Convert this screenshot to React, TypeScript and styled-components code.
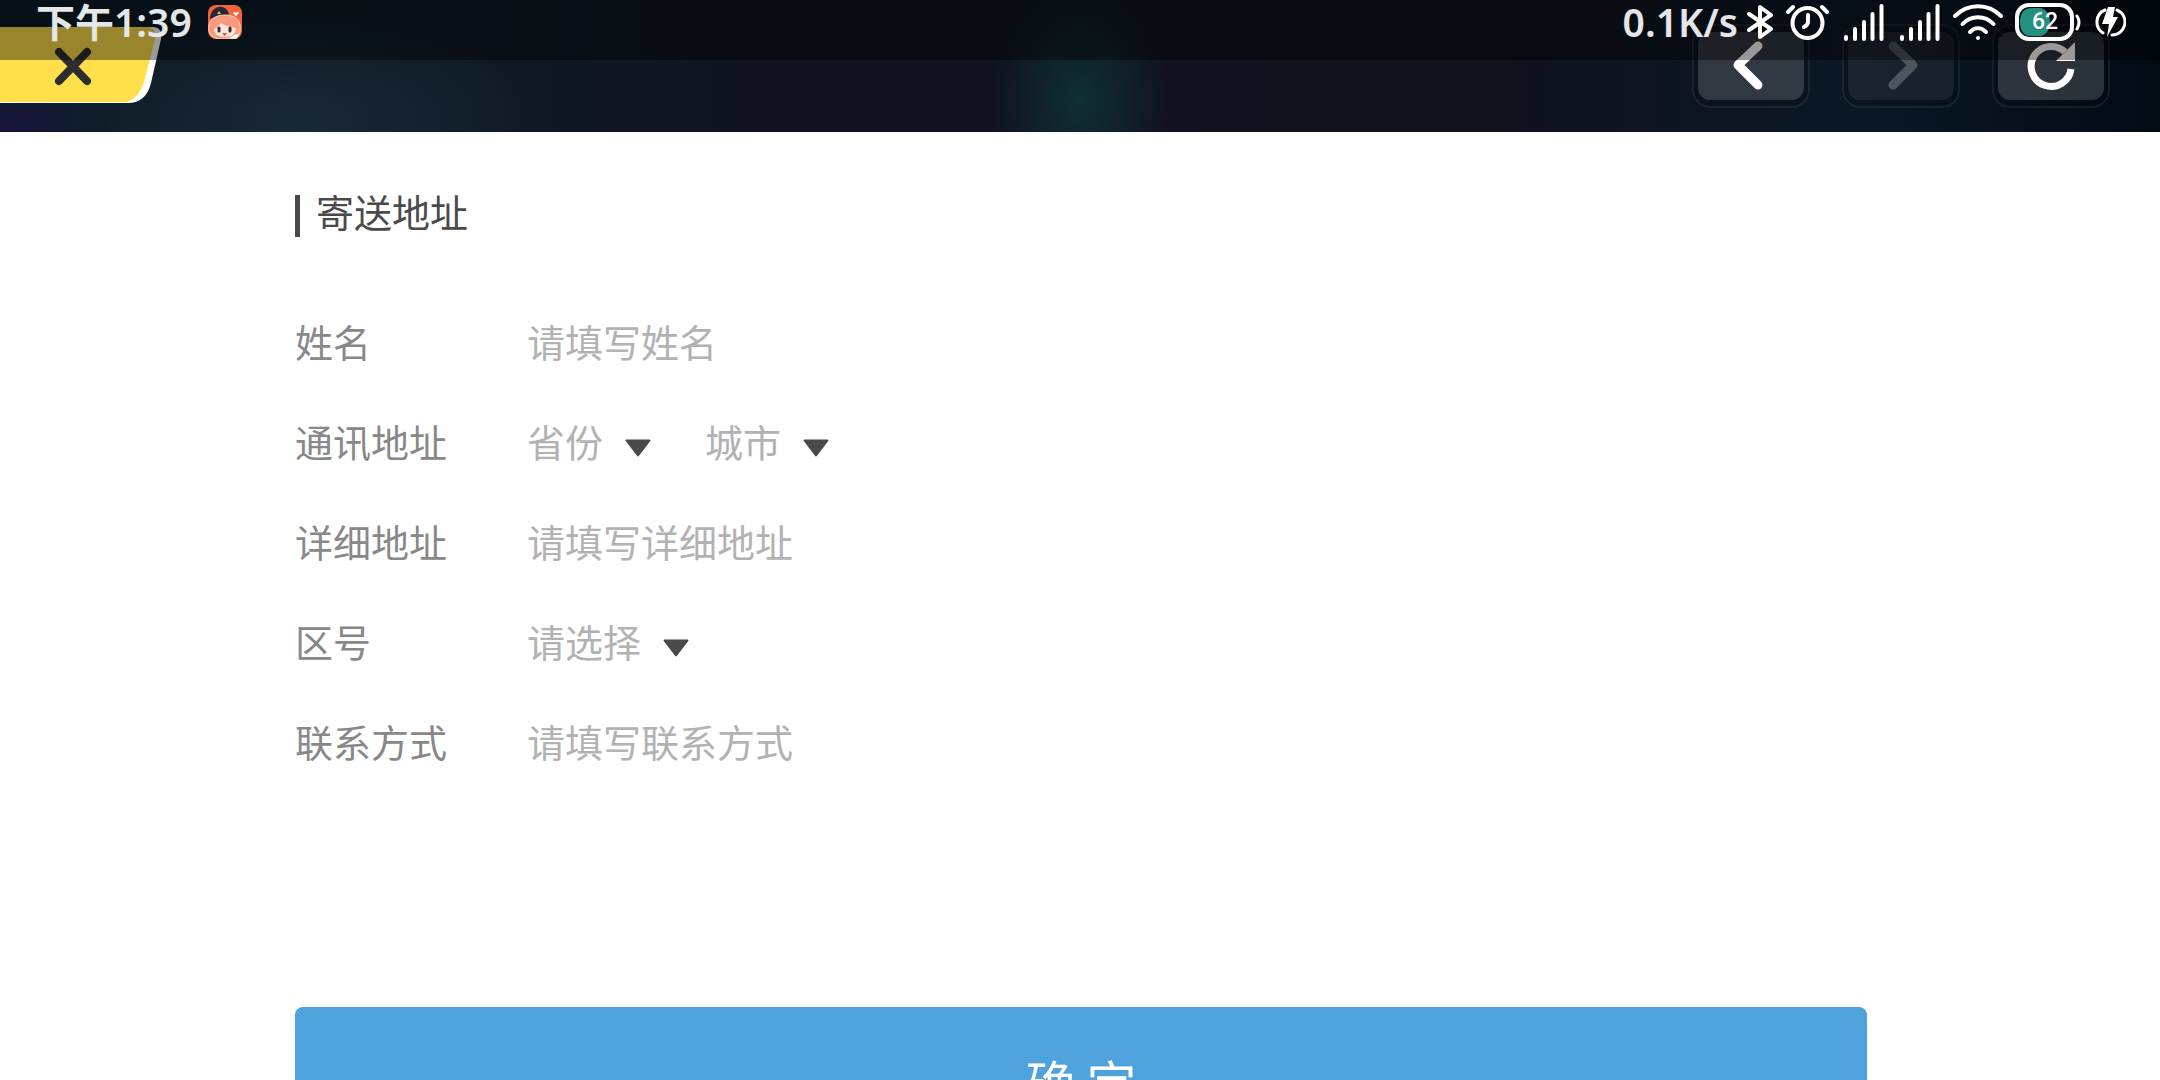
import React from "react";
import styled, { createGlobalStyle, css } from "styled-components";

const GlobalStyle = createGlobalStyle`
  *, *::before, *::after { box-sizing: border-box; }
  body {
    margin: 0;
    background: #fff;
    font-family: "Noto Sans CJK SC", "Noto Sans", sans-serif;
  }
  button, input, select { font: inherit; }
`;

const Screen = styled.div`
  height: 100vh;
  display: flex;
  flex-direction: column;
  position: relative;
  overflow: hidden;
`;

const StatusBar = styled.div`
  position: absolute;
  inset: 0 0 auto 0;
  z-index: 2;
  height: 60px;
  padding: 0 34px 0 36px;
  display: flex;
  align-items: flex-start;
  justify-content: space-between;
  background: rgba(0, 0, 0, 0.4);
  pointer-events: none;
`;

const StatusGroup = styled.div<{ $gap: number }>`
  height: 44px;
  display: flex;
  align-items: center;
  gap: ${(p) => p.$gap}px;
`;

const StatusText = styled.span`
  font-family: "Noto Sans", "Noto Sans CJK SC", sans-serif;
  font-size: 39px;
  font-weight: 600;
  line-height: 44px;
  color: #e4e6e8;
  white-space: nowrap;
`;

const Glyph = styled.svg`
  display: block;
  flex: none;
`;

const Battery = styled.div`
  display: grid;
  align-items: center;
  & > * { grid-area: 1 / 1; }
`;

const BatteryLevel = styled.span`
  width: 60px;
  text-align: center;
  font-family: Roboto, sans-serif;
  font-size: 23px;
  font-weight: 500;
  line-height: 36px;
  color: #fff;
`;

const GameBar = styled.header`
  flex: none;
  height: 132px;
  padding: 24px 50px 0 0;
  display: flex;
  align-items: flex-start;
  justify-content: space-between;
  background:
    radial-gradient(ellipse 90px 130px at 50% 100px, #102f35 0%, transparent 100%),
    radial-gradient(ellipse 240px 110px at 14% 120px, #1a2937 0%, transparent 100%),
    radial-gradient(ellipse 110px 60px at 0% 125px, #17133a 0%, transparent 100%),
    linear-gradient(90deg, #0c1c26 0%, #0e1a26 20%, #10131f 35%, #10121e 70%, #0b1826 86%, #020b14 100%);
`;

const CloseButton = styled.button`
  padding: 0;
  border: 0;
  background: none;
  display: block;
  cursor: pointer;
`;

const NavGroup = styled.nav`
  display: flex;
  gap: 32px;
`;

const NavButton = styled.button`
  width: 118px;
  height: 84px;
  padding: 6px 4px;
  border: 2px solid rgba(255, 255, 255, 0.07);
  border-radius: 18px;
  background: rgba(0, 0, 0, 0.12);
  display: flex;
  cursor: pointer;
  &:disabled { cursor: default; }
`;

const NavFace = styled.svg<{ $muted?: boolean }>`
  display: block;
  width: 106px;
  height: 68px;
  border-radius: 12px;
  background: ${(p) => (p.$muted ? "rgba(255, 255, 255, 0.07)" : "rgba(255, 255, 255, 0.16)")};
  color: ${(p) => (p.$muted ? "#4d565e" : "#fff")};
  fill: none;
  stroke: currentColor;
`;

const Form = styled.form`
  flex: 1 0 auto;
  padding: 63px 293px 0 295px;
  display: flex;
  flex-direction: column;
  background: #fff;
`;

const Title = styled.h1`
  margin: 0 0 78px;
  padding: 0 0 10px 16px;
  align-self: flex-start;
  border-left: 5px solid #4a4a4a;
  font-size: 38px;
  font-weight: 400;
  line-height: 32px;
  color: #4a4a4a;
`;

const Row = styled.div`
  height: 52px;
  margin-bottom: 48px;
  display: grid;
  grid-template-columns: 232px 1fr;
  align-items: center;
  font-size: 38px;
  line-height: 52px;
`;

const Label = styled.label`
  color: #888;
`;

const field = css`
  height: 52px;
  padding: 0;
  border: 0;
  outline: 0;
  border-radius: 0;
  background: none;
  color: #b2b2b2;
`;

const TextInput = styled.input`
  ${field}
  width: 100%;
  &::placeholder { color: #b2b2b2; opacity: 1; }
`;

const Choices = styled.div`
  display: flex;
  gap: 54px;
`;

const SelectBox = styled.span`
  display: grid;
  align-items: center;
  & > * { grid-area: 1 / 1; }
  & > svg { justify-self: end; pointer-events: none; margin-top: 14px; }
`;

const Select = styled.select`
  ${field}
  appearance: none;
  padding-right: 47px;
`;

const Confirm = styled.button`
  height: 148px;
  margin-top: 192px;
  border: 0;
  border-radius: 8px;
  background: #4ea3dd;
  color: #fff;
  font-size: 50px;
  line-height: 72px;
  cursor: pointer;
`;

type PickerProps = { id: string; label?: string; placeholder: string; options: string[] };

function Picker({ id, label, placeholder, options }: PickerProps) {
  return (
    <SelectBox>
      <Select id={id} aria-label={label} defaultValue="">
        <option value="">{placeholder}</option>
        {options.map((o) => (
          <option key={o} value={o}>{o}</option>
        ))}
      </Select>
      <svg width="26" height="18" viewBox="0 0 26 18" aria-hidden="true">
        <path d="M1.500 1.500H24.500L13 16.500Z" fill="#4a4a4a" stroke="#4a4a4a" strokeWidth="2" strokeLinejoin="round" />
      </svg>
    </SelectBox>
  );
}

function AppBadge() {
  return (
    <Glyph width="34" height="34" viewBox="0 0 34 34" aria-hidden="true">
      <defs>
        <clipPath id="badge"><rect width="34" height="34" rx="8" /></clipPath>
      </defs>
      <g clipPath="url(#badge)">
        <rect width="34" height="34" fill="#f4643f" />
        <path d="M2 14C2 6 8 1 14 2c5 1 7 5 7 9-7-1-13 0-19 3Z" fill="#2c2638" />
        <path d="M9 9l2-3 2 3Z" fill="#f2c14a" />
        <path d="M1 26C-1 16 6 10 17 10s17 6 15 17c-1 5-5 7-15 7S2 32 1 26Z" fill="#f79b80" stroke="#fbd0bd" strokeWidth="1" />
        <path d="M6 24c3-1 5-3 7-6 4 3 10 4 15 5 0 6-4 9-11 9S6 29 6 24Z" fill="#fde6da" />
        <path d="M11 23v3M22 23v3" stroke="#43262b" strokeWidth="3" strokeLinecap="round" />
        <path d="M14 28h5l-2 3Z" fill="#d0564a" />
        <path d="M28 11l-3-3q1-2 3 0 2-2 3 0Z" fill="#fff" />
        <path d="M21 33c3-1 5-4 10-4l-2 5Z" fill="#fff" />
      </g>
    </Glyph>
  );
}

function Bluetooth() {
  return (
    <Glyph width="28" height="36" viewBox="0 0 28 36" fill="none" stroke="#fff" strokeWidth="4" strokeLinecap="round" strokeLinejoin="round" aria-hidden="true">
      <path d="M3 10L25 25L14 33V3L25 11L3 26" />
    </Glyph>
  );
}

function Alarm() {
  return (
    <Glyph width="46" height="36" viewBox="0 0 46 36" fill="none" stroke="#fff" strokeWidth="4" strokeLinecap="round" aria-hidden="true">
      <circle cx="21.500" cy="19" r="15" />
      <path d="M22 11V18Q22 21 18 23" />
      <path d="M2 8L7 3M36 3L41 8" />
    </Glyph>
  );
}

function Signal({ width }: { width: number }) {
  return (
    <Glyph width={width} height="38" viewBox={`0 0 ${width} 38`} stroke="#fff" strokeWidth="4" strokeLinecap="round" aria-hidden="true">
      <path d="M2 34v2M11 26v10M20 19v17M28.500 11v25M37.500 3v33" />
    </Glyph>
  );
}

function Wifi() {
  return (
    <Glyph width="50" height="38" viewBox="0 0 50 38" fill="none" stroke="#fff" strokeWidth="4" strokeLinecap="round" aria-hidden="true">
      <path d="M2 13C15 0 35 0 48 13" />
      <path d="M9.500 21C18 12 32 12 40.500 21" />
      <path d="M17 29C22 24 28 24 33 29" />
      <circle cx="25" cy="35" r="2" fill="#fff" stroke="none" />
    </Glyph>
  );
}

function Charging() {
  return (
    <Glyph width="32" height="32" viewBox="0 0 32 32" fill="none" stroke="#fff" strokeWidth="3" strokeLinecap="round" aria-hidden="true">
      <path d="M11 4A13 13 0 0 0 9 27M23 4A13 13 0 0 1 18 29" />
      <path d="M14 1H21L19 11H24L13 31L15 18H8Z" fill="#fff" stroke="none" />
    </Glyph>
  );
}

export default function App() {
  return (
    <>
      <GlobalStyle />
      <Screen>
        <StatusBar>
          <StatusGroup $gap={16}>
            <StatusText>下午1:39</StatusText>
            <AppBadge />
          </StatusGroup>
          <StatusGroup $gap={12}>
            <StatusGroup $gap={8}>
              <StatusText>0.1K/s</StatusText>
              <Bluetooth />
            </StatusGroup>
            <Alarm />
            <Signal width={44} />
            <Signal width={41} />
            <Wifi />
            <Battery>
              <Glyph width="67" height="40" viewBox="0 0 67 40" fill="none" stroke="#fff" strokeWidth="4" strokeLinecap="round" aria-hidden="true">
                <path d="M17 6H26Q35 9 35 20T26 34H17Q5 34 5 20T17 6Z" fill="#26907f" stroke="none" />
                <rect x="2" y="3" width="55" height="34" rx="12" />
                <path d="M62 14Q66 20 62 27" strokeWidth="3" />
              </Glyph>
              <BatteryLevel>62</BatteryLevel>
            </Battery>
            <Charging />
          </StatusGroup>
        </StatusBar>

        <GameBar>
          <CloseButton type="button" aria-label="关闭">
            <Glyph width="164" height="79" viewBox="0 -3 164 79" aria-hidden="true">
              <path d="M0 0H152Q163 0 161 12L151 56Q146 76 128 76H0Z" fill="#fff" />
              <path d="M0 0H146Q157 0 155 12L144 55Q139 71 127 75H0Z" fill="#ffe04a" />
              <path d="M59 25L87 54M87 25L59 54" stroke="#2d2d2d" strokeWidth="8" strokeLinecap="round" />
            </Glyph>
          </CloseButton>
          <NavGroup>
            <NavButton type="button" aria-label="后退">
              <NavFace viewBox="0 0 106 68" strokeWidth="9" strokeLinecap="round" strokeLinejoin="round">
                <path d="M60 14L40 33L60 53" />
              </NavFace>
            </NavButton>
            <NavButton type="button" aria-label="前进" disabled>
              <NavFace viewBox="0 0 106 68" strokeWidth="9" strokeLinecap="round" strokeLinejoin="round" $muted>
                <path d="M45 14L65 33L45 53" />
              </NavFace>
            </NavButton>
            <NavButton type="button" aria-label="刷新">
              <NavFace viewBox="0 0 106 68" strokeWidth="7">
                <path d="M73 37A20 20 0 1 1 67 20" />
                <path d="M77 10V29H58Z" fill="currentColor" stroke="none" />
              </NavFace>
            </NavButton>
          </NavGroup>
        </GameBar>

        <Form onSubmit={(e) => e.preventDefault()}>
          <Title>寄送地址</Title>
          <Row>
            <Label htmlFor="name">姓名</Label>
            <TextInput id="name" placeholder="请填写姓名" />
          </Row>
          <Row>
            <Label htmlFor="province">通讯地址</Label>
            <Choices>
              <Picker id="province" placeholder="省份" options={["北京", "上海"]} />
              <Picker id="city" label="城市" placeholder="城市" options={["北京", "上海"]} />
            </Choices>
          </Row>
          <Row>
            <Label htmlFor="address">详细地址</Label>
            <TextInput id="address" placeholder="请填写详细地址" />
          </Row>
          <Row>
            <Label htmlFor="area">区号</Label>
            <Choices>
              <Picker id="area" placeholder="请选择" options={["+86"]} />
            </Choices>
          </Row>
          <Row>
            <Label htmlFor="phone">联系方式</Label>
            <TextInput id="phone" type="tel" placeholder="请填写联系方式" />
          </Row>
          <Confirm type="submit">确 定</Confirm>
        </Form>
      </Screen>
    </>
  );
}
